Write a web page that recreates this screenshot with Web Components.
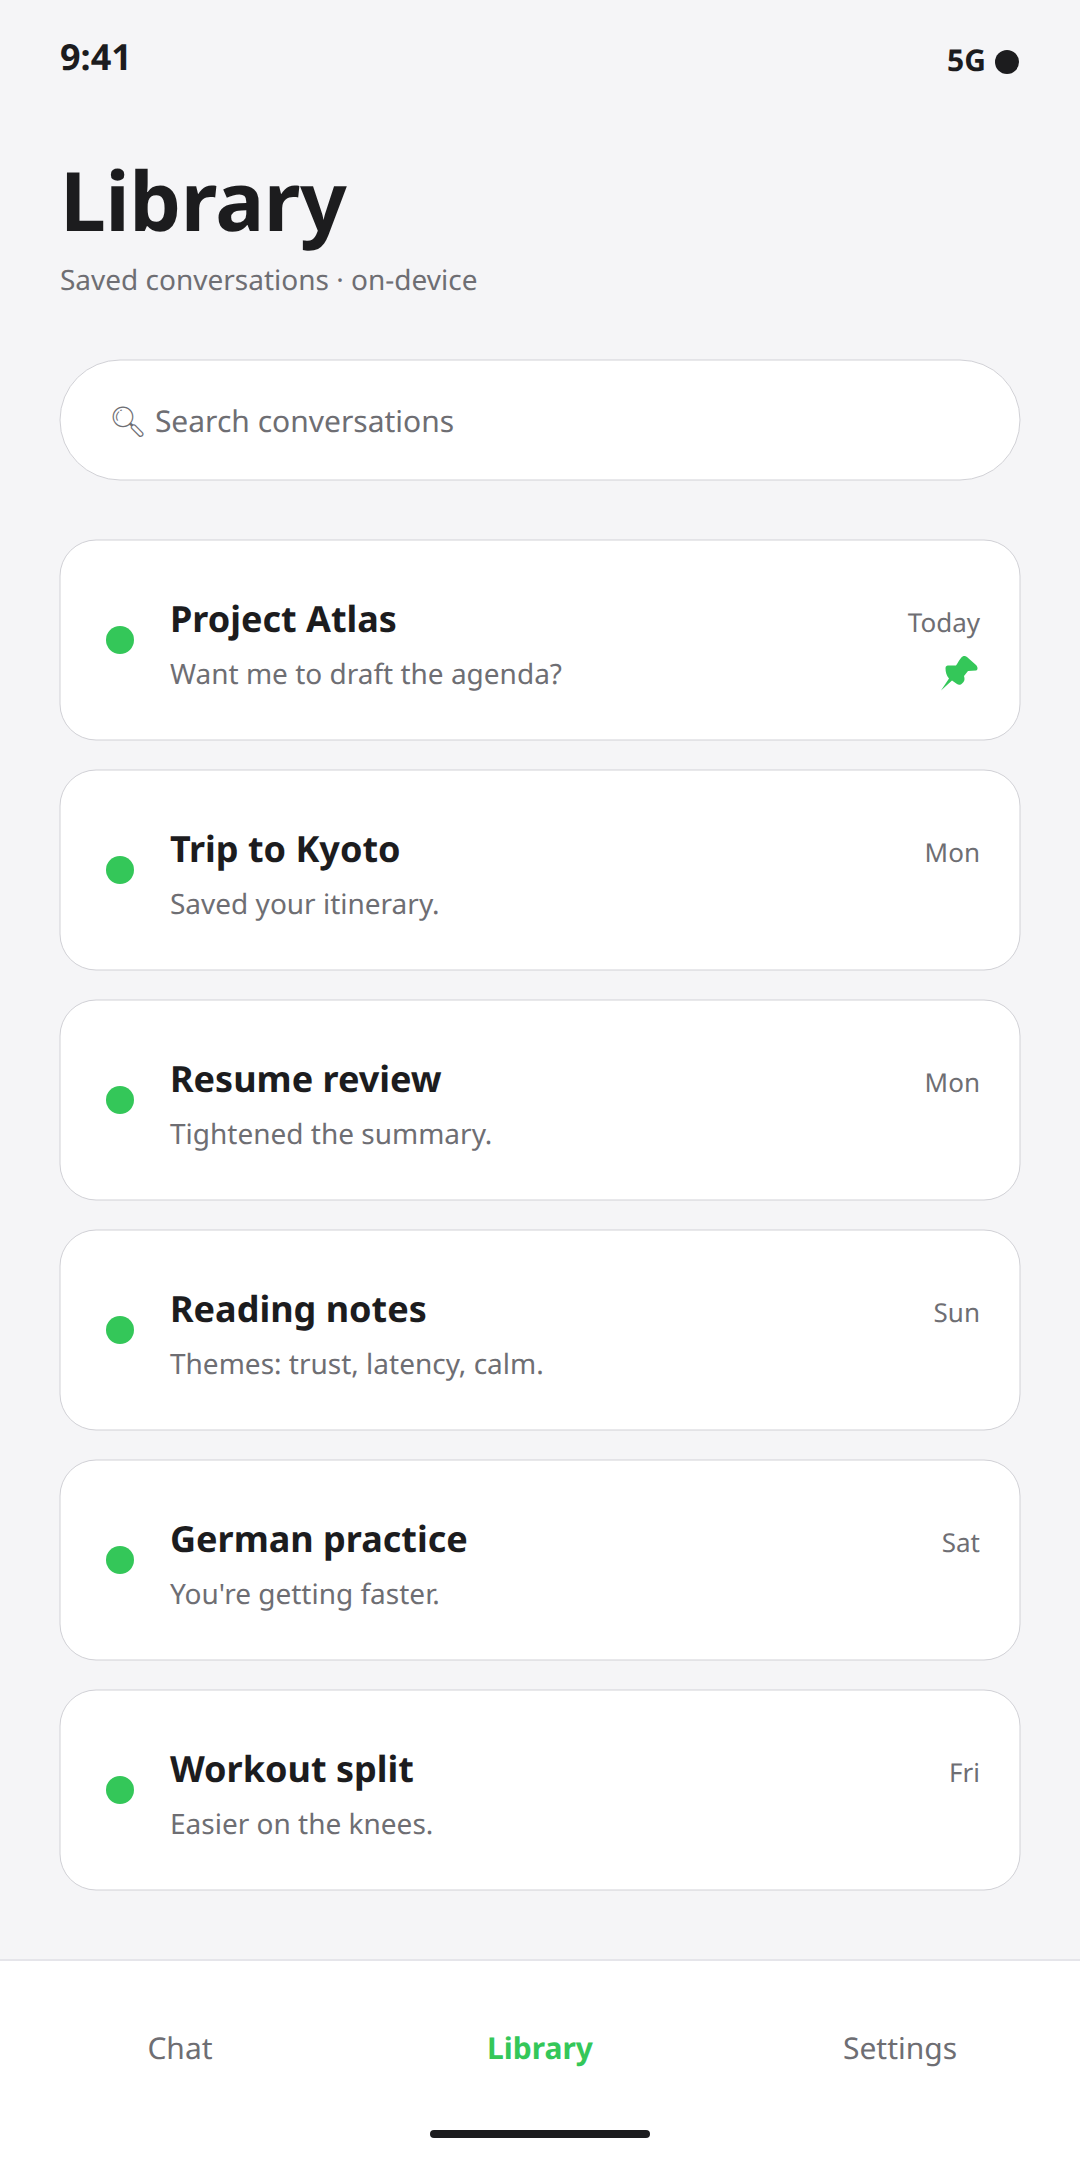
<!DOCTYPE html>
<html lang="en">
<head>
<meta charset="UTF-8">
<title>Library</title>
<style>
  html, body { margin: 0; padding: 0; }
  body {
    width: 1080px; height: 2160px; overflow: hidden;
    background: #f5f5f7; color: #1c1c1e;
    font-family: "Noto Sans", sans-serif;
    text-rendering: geometricPrecision;
    display: flex; flex-direction: column;
  }
  lib-list { flex: 1; }
</style>
</head>
<body>
  <status-bar time="9:41" net="5G"></status-bar>
  <lib-header title="Library" sub="Saved conversations · on-device"></lib-header>
  <search-box placeholder="Search conversations"></search-box>
  <lib-list>
    <chat-card title="Project Atlas" sub="Want me to draft the agenda?" when="Today" pinned></chat-card>
    <chat-card title="Trip to Kyoto" sub="Saved your itinerary." when="Mon"></chat-card>
    <chat-card title="Resume review" sub="Tightened the summary." when="Mon"></chat-card>
    <chat-card title="Reading notes" sub="Themes: trust, latency, calm." when="Sun"></chat-card>
    <chat-card title="German practice" sub="You're getting faster." when="Sat"></chat-card>
    <chat-card title="Workout split" sub="Easier on the knees." when="Fri"></chat-card>
  </lib-list>
  <tab-bar>
    <tab-item>Chat</tab-item>
    <tab-item active>Library</tab-item>
    <tab-item>Settings</tab-item>
  </tab-bar>

<script>
  // hairline sits half a pixel out, so it lands on two rows like the reference
  const hairline = `
    :host::before {
      content: ""; position: absolute; left: 0; top: 0;
      width: calc(100% + 1px); height: calc(100% + 1px); box-sizing: border-box;
      border: 1px solid #d1d1d6; border-radius: var(--r);
      transform: translate(-0.5px, -0.5px); pointer-events: none;
    }`;

  class Base extends HTMLElement {
    render (html) {
      this.attachShadow({ mode: "open" }).innerHTML = html;
    }
    connectedCallback () { if (!this.shadowRoot) this.render(this.markup()); }
  }

  class StatusBar extends Base {
    markup () {
      return `<style>
        :host { display: flex; justify-content: space-between; align-items: center; padding: 32px 61px 0 60px; height: 50px; font-weight: 700; }
        .time { font-size: 36px; line-height: 50px; }
        .right { display: flex; align-items: center; gap: 9px; font-size: 30px; padding-top: 4px; }
        .dot { width: 24px; height: 24px; border-radius: 50%; background: #1c1c1e; margin-top: 6px; }
      </style>
      <span class="time">${this.getAttribute("time")}</span>
      <span class="right"><span>${this.getAttribute("net")}</span><span class="dot"></span></span>`;
    }
  }

  class LibHeader extends Base {
    markup () {
      return `<style>
        :host { display: block; padding: 68px 60px 0; }
        h1 { margin: 0; font-size: 82px; line-height: 100px; font-weight: 700; letter-spacing: -0.5px; }
        p { margin: 9px 0 0; font-size: 28px; line-height: 42px; color: #6e6e73; }
      </style>
      <h1>${this.getAttribute("title")}</h1>
      <p>${this.getAttribute("sub")}</p>`;
    }
  }

  class SearchBox extends Base {
    markup () {
      return `<style>
        :host { --r: 60.5px; position: relative; display: flex; align-items: center; margin: 59px 60px 0; height: 120px; padding: 0 49px; box-sizing: border-box; background: #fff; border-radius: 60px; font-size: 30px; color: #6e6e73; }
        ${hairline}
        .glyph { font-variant-emoji: text; }
      </style>
      <span><span class="glyph">🔍&#xFE0E;</span> ${this.getAttribute("placeholder")}</span>`;
    }
  }

  class LibList extends Base {
    markup () {
      return `<style>
        :host { display: flex; flex-direction: column; gap: 30px; padding: 60px 60px 0; }
      </style><slot></slot>`;
    }
  }

  class ChatCard extends Base {
    markup () {
      const pin = this.hasAttribute("pinned")
        ? `<svg class="pin" width="44" height="44" viewBox="0 0 44 44" role="img" aria-label="Pinned">
            <path d="M5 40.5 13 28.5C10.5 26 9.5 22 9.5 18 9.5 16 11 15.5 13 15.5L20 15.5C22 13 23 10 25 8 27 5.5 29 5.5 31 7L40 15C42 17 42 20 40 20.5L32 21 28 26C28.5 28 29 30 27.5 32 25 35 23 35.5 21 34L16 30.5Z" fill="#34c759"/>
          </svg>`
        : "";
      return `<style>
        :host { --r: 36.5px; position: relative; display: flex; align-items: center; gap: 36px; height: 200px; box-sizing: border-box; padding: 0 40px 0 46px; background: #fff; border-radius: 36px; }
        ${hairline}
        .dot { flex: none; width: 28px; height: 28px; border-radius: 50%; background: #34c759; }
        .main { flex: 1; min-width: 0; padding-top: 8px; }
        .title { font-size: 36px; line-height: 50px; font-weight: 700; color: #1c1c1e; }
        .sub { font-size: 28px; line-height: 40px; margin-top: 10px; color: #6e6e73; }
        .meta { display: flex; flex-direction: column; align-items: flex-end; align-self: flex-start; padding-top: 62px; color: #6e6e73; font-size: 26px; line-height: 40px; }
        .pin { display: block; margin: 8px 0 0 0; }
      </style>
      <span class="dot"></span>
      <div class="main">
        <div class="title">${this.getAttribute("title")}</div>
        <div class="sub">${this.getAttribute("sub")}</div>
      </div>
      <div class="meta"><span>${this.getAttribute("when")}</span>${pin}</div>`;
    }
  }

  class TabBar extends Base {
    markup () {
      return `<style>
        :host { display: grid; grid-template-columns: repeat(3, 1fr); height: 200px; box-sizing: border-box; padding-top: 67px; background: #fff; box-shadow: 0 -1px 0 #e5e5ea, inset 0 1px 0 #e5e5ea; position: relative; }
        .home { position: absolute; left: 430px; top: 170px; width: 220px; height: 8px; border-radius: 4px; background: #1c1c1e; }
      </style><slot></slot><span class="home"></span>`;
    }
  }

  class TabItem extends Base {
    markup () {
      return `<style>
        :host { display: block; text-align: center; font-size: 30px; line-height: 42px; color: #6e6e73; }
        :host([active]) { color: #34c759; font-weight: 700; }
      </style><slot></slot>`;
    }
  }

  customElements.define("status-bar", StatusBar);
  customElements.define("lib-header", LibHeader);
  customElements.define("search-box", SearchBox);
  customElements.define("lib-list", LibList);
  customElements.define("chat-card", ChatCard);
  customElements.define("tab-bar", TabBar);
  customElements.define("tab-item", TabItem);
</script>
</body>
</html>
